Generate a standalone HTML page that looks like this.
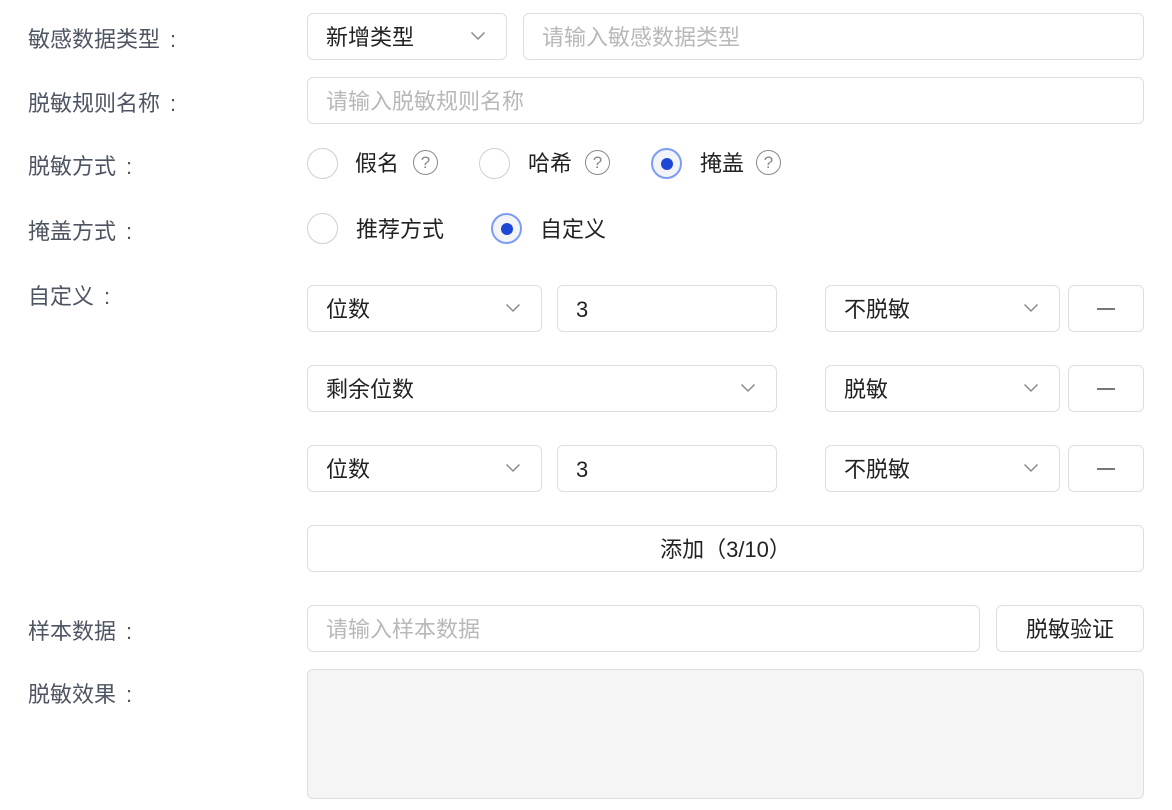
<!DOCTYPE html>
<html><head><meta charset="utf-8">
<style>
*{box-sizing:border-box;margin:0;padding:0}
body{width:1172px;height:810px;background:#fff;position:relative;overflow:hidden;font-family:"Liberation Sans","Noto Sans CJK SC",sans-serif;font-size:22px;color:#222}
.lbl{position:absolute;left:28px;color:#4e5562;line-height:30px;height:30px;white-space:nowrap}
.lbl span{margin-left:10px}
.box{position:absolute;border:1.5px solid #dedede;border-radius:6px;background:#fff;height:47px;line-height:48px;padding-left:18px;white-space:nowrap}
.ph{color:#b8b8b8}
.chev{position:absolute;right:20px;top:17px;width:16px;height:10px}
.radio{position:absolute;width:31px;height:31px;border-radius:50%;border:1.5px solid #cfcfd4;background:#fff}
.radio.on{border:2px solid #7d9cf5;background:#f3f4f7}
.radio.on::after{content:"";position:absolute;left:50%;top:50%;width:12px;height:12px;margin:-6px 0 0 -6px;border-radius:50%;background:#1f47d6}
.rt{position:absolute;line-height:30px;color:#222}
.q{position:absolute;width:25px;height:25px;border-radius:50%;border:1.5px solid #8a8a8a;color:#8a8a8a;font-size:17px;line-height:23px;text-align:center}
.btn{text-align:center;padding-left:0}
.minus{position:absolute;left:50%;top:50%;width:18px;height:2px;margin:-1px 0 0 -9px;background:#777}
</style></head><body>
<svg width="0" height="0" style="position:absolute"><defs><symbol id="cv" viewBox="0 0 16 10"><path d="M1.5 1.5 L8 8 L14.5 1.5" fill="none" stroke="#8a8a8a" stroke-width="1.5"/></symbol></defs></svg>

<div class="lbl" style="top:25px">敏感数据类型<span>:</span></div>
<div class="lbl" style="top:89px">脱敏规则名称<span>:</span></div>
<div class="lbl" style="top:152px">脱敏方式<span>:</span></div>
<div class="lbl" style="top:217px">掩盖方式<span>:</span></div>
<div class="lbl" style="top:282px">自定义<span>:</span></div>
<div class="lbl" style="top:617px">样本数据<span>:</span></div>
<div class="lbl" style="top:680px">脱敏效果<span>:</span></div>

<div class="box" style="left:307px;top:13px;width:200px">新增类型<svg class="chev"><use href="#cv"/></svg></div>
<div class="box ph" style="left:523px;top:13px;width:621px">请输入敏感数据类型</div>
<div class="box ph" style="left:307px;top:77px;width:837px">请输入脱敏规则名称</div>

<div class="radio" style="left:307px;top:148px"></div><div class="rt" style="left:355px;top:149px">假名</div><div class="q" style="left:413px;top:150px">?</div>
<div class="radio" style="left:479px;top:148px"></div><div class="rt" style="left:528px;top:149px">哈希</div><div class="q" style="left:585px;top:150px">?</div>
<div class="radio on" style="left:651px;top:148px"></div><div class="rt" style="left:700px;top:149px">掩盖</div><div class="q" style="left:756px;top:150px">?</div>

<div class="radio" style="left:307px;top:213px"></div><div class="rt" style="left:356px;top:215px">推荐方式</div>
<div class="radio on" style="left:491px;top:213px"></div><div class="rt" style="left:540px;top:215px">自定义</div>

<div class="box" style="left:307px;top:285px;width:235px">位数<svg class="chev"><use href="#cv"/></svg></div>
<div class="box" style="left:557px;top:285px;width:220px">3</div>
<div class="box" style="left:825px;top:285px;width:235px">不脱敏<svg class="chev"><use href="#cv"/></svg></div>
<div class="box btn" style="left:1068px;top:285px;width:76px"><div class="minus"></div></div>

<div class="box" style="left:307px;top:365px;width:470px">剩余位数<svg class="chev"><use href="#cv"/></svg></div>
<div class="box" style="left:825px;top:365px;width:235px">脱敏<svg class="chev"><use href="#cv"/></svg></div>
<div class="box btn" style="left:1068px;top:365px;width:76px"><div class="minus"></div></div>

<div class="box" style="left:307px;top:445px;width:235px">位数<svg class="chev"><use href="#cv"/></svg></div>
<div class="box" style="left:557px;top:445px;width:220px">3</div>
<div class="box" style="left:825px;top:445px;width:235px">不脱敏<svg class="chev"><use href="#cv"/></svg></div>
<div class="box btn" style="left:1068px;top:445px;width:76px"><div class="minus"></div></div>

<div class="box btn" style="left:307px;top:525px;width:837px">添加（3/10）</div>

<div class="box ph" style="left:307px;top:605px;width:673px">请输入样本数据</div>
<div class="box btn" style="left:996px;top:605px;width:148px">脱敏验证</div>

<div class="box" style="left:307px;top:669px;width:837px;height:130px;background:#f5f5f5"></div>
</body></html>
